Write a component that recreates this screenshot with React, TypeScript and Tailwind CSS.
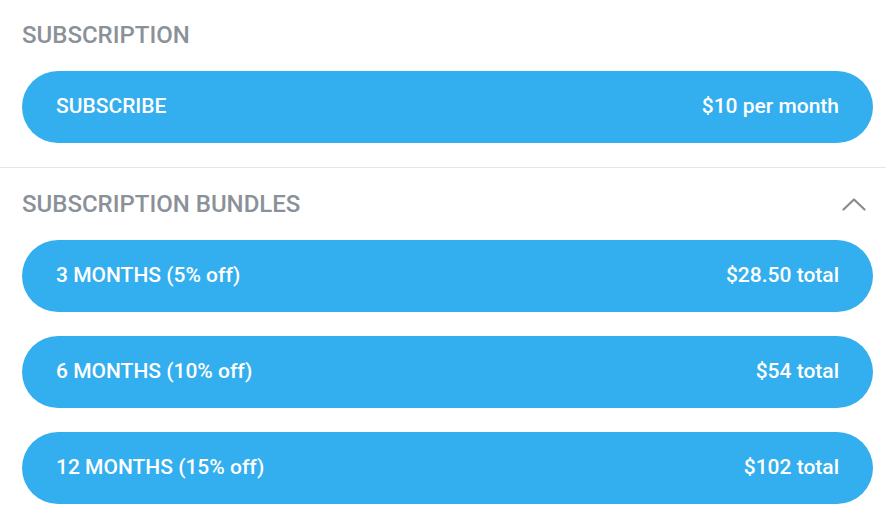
const bundles = [
  { label: '3 MONTHS (5% off)', price: '$28.50 total' },
  { label: '6 MONTHS (10% off)', price: '$54 total' },
  { label: '12 MONTHS (15% off)', price: '$102 total' },
];

function PlanButton({ label, price }: { label: string; price: string }) {
  return (
    <button
      type="button"
      className="flex h-[72px] w-full items-center justify-between rounded-full bg-[#33aeee] px-[34px] text-[21px] font-medium text-white"
    >
      <span>{label}</span>
      <span>{price}</span>
    </button>
  );
}

export default function App() {
  return (
    <div className="min-h-screen bg-white font-['Roboto',_'Liberation_Sans',_sans-serif]">
      <div className="pb-[24px] pl-[22px] pr-[13px] pt-[21px]">
        <h2 className="mb-[22px] text-[24px] font-medium leading-[28px] text-[#8a9199]">SUBSCRIPTION</h2>
        <PlanButton label="SUBSCRIBE" price="$10 per month" />
      </div>

      <div className="border-t border-[#e6e6e6] pl-[22px] pr-[13px] pt-[22px]">
        <div className="mb-[22px] flex items-center justify-between">
          <h2 className="text-[24px] font-medium leading-[28px] text-[#8a9199]">SUBSCRIPTION BUNDLES</h2>
          <svg width="24" height="13" viewBox="0 0 24 13" fill="none" className="mr-[7px]">
            <path d="M1.5 11.5 L12 1.5 L22.5 11.5" stroke="#8a8a8a" strokeWidth="2.2" strokeLinecap="round" strokeLinejoin="round" />
          </svg>
        </div>
        <div className="flex flex-col gap-[24px]">
          {bundles.map((b) => (
            <PlanButton key={b.label} label={b.label} price={b.price} />
          ))}
        </div>
      </div>
    </div>
  );
}
